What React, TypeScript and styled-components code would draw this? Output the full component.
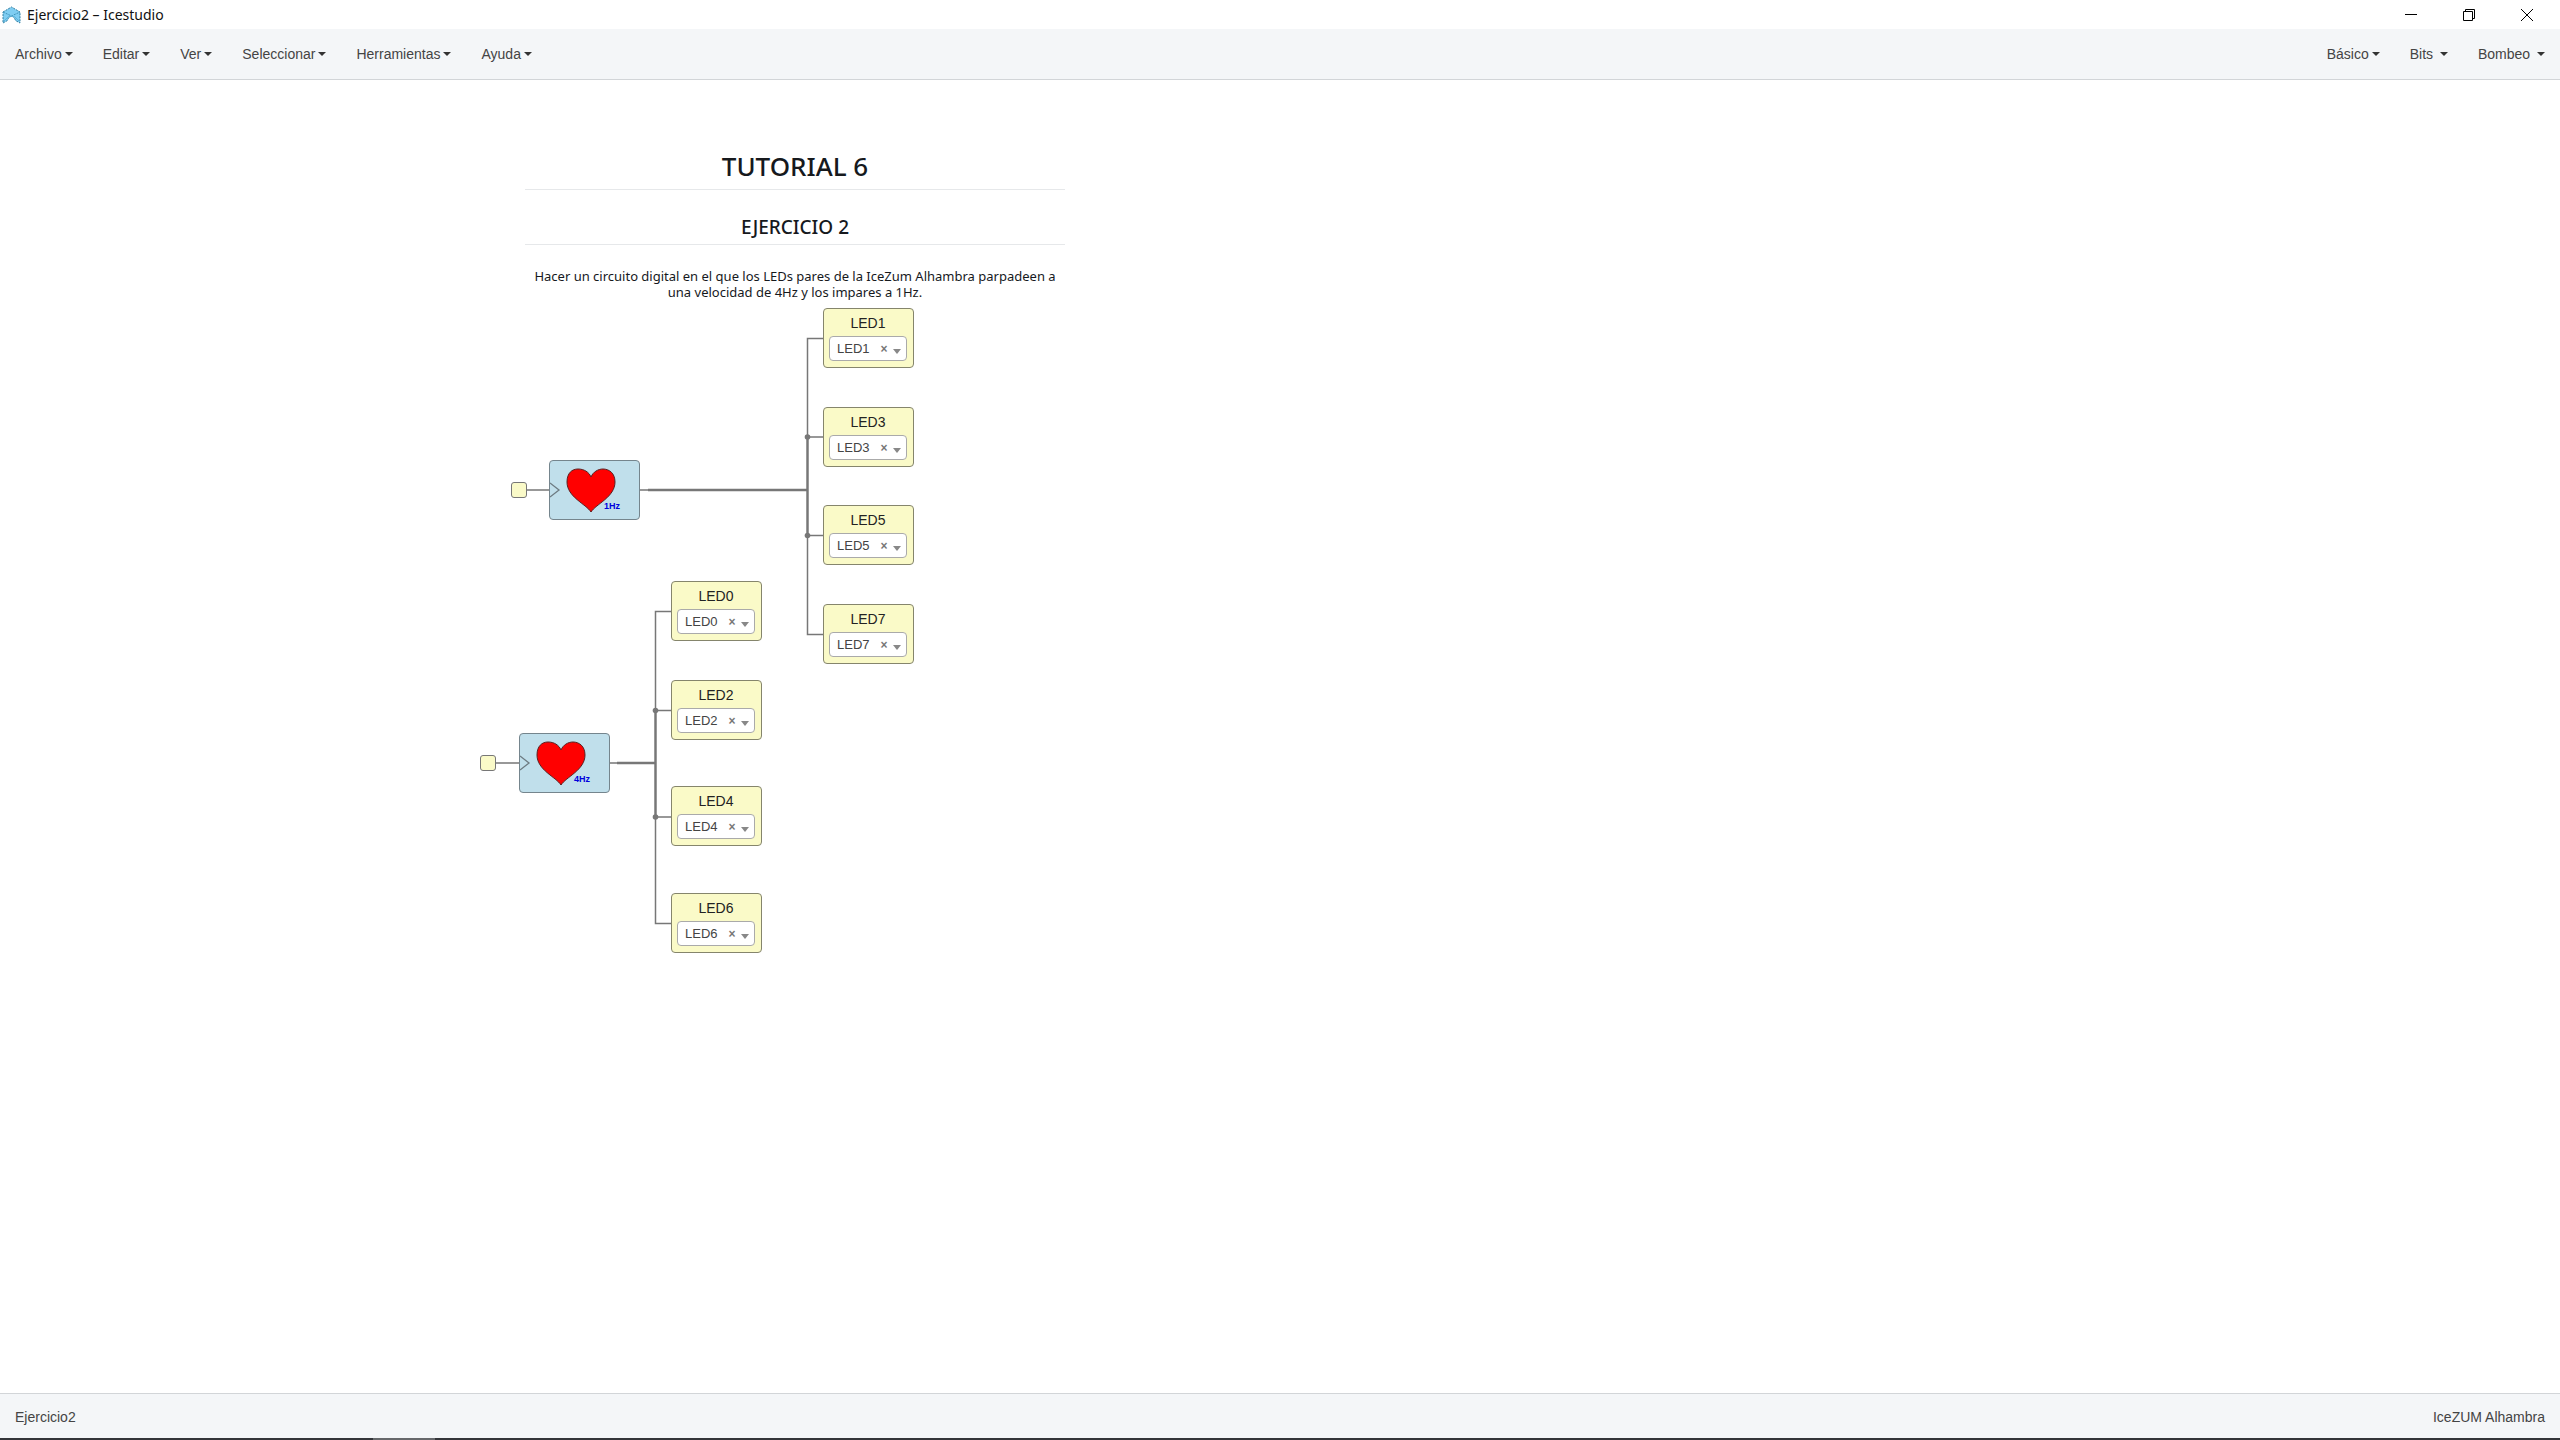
import React from 'react';
import styled, { createGlobalStyle } from 'styled-components';

const GlobalStyle = createGlobalStyle`
  * { box-sizing: border-box; }
  body { margin: 0; background: #fff; }
  button, select { font: inherit; color: inherit; border: 0; background: none; padding: 0; margin: 0; }
`;

const ui = '"Liberation Sans", Arial, sans-serif';
const system = '"Noto Sans", "Open Sans", sans-serif';

const Window = styled.div`
  display: flex;
  flex-direction: column;
  min-height: 100vh;
  font-family: ${ui};
  font-size: 14px;
  line-height: 20px;
  color: #444;
`;

const TitleBar = styled.header`
  display: flex;
  align-items: center;
  height: 29px;
  padding: 0 4px 0 2px;
  background: #fff;
`;

const WindowTitle = styled.h1`
  flex: 1;
  margin: 0 0 0 5px;
  font: 400 14px/20px ${system};
  color: #111;
`;

const WindowButton = styled.button`
  display: flex;
  align-items: center;
  justify-content: center;
  width: 58px;
  height: 28px;
`;

const MenuBar = styled.nav`
  display: flex;
  justify-content: space-between;
  height: 51px;
  background: #f4f6f8;
  border-bottom: 1px solid #d2d5d8;
`;

const MenuGroup = styled.div`
  display: flex;
`;

const MenuButton = styled.button`
  display: flex;
  align-items: center;
  padding: 0 15px;
  white-space: pre;
`;

const Caret = styled.span`
  margin-left: 3px;
  border: 4px solid transparent;
  border-top-color: #333;
  border-bottom: 0;
`;

const Canvas = styled.main`
  position: relative;
  flex: 1;
  overflow: hidden;
`;

const Wires = styled.svg`
  position: absolute;
  inset: 0;
  width: 100%;
  height: 100%;
`;

type Spot = { $x: number; $y: number };

const Note = styled.article<Spot>`
  position: absolute;
  left: ${p => p.$x}px;
  top: ${p => p.$y}px;
  width: 540px;
  text-align: center;
  font: 400 13px/16px ${system};
  color: #16191d;
`;

const NoteTitle = styled.h2`
  margin: 0 0 21px;
  padding-bottom: 7px;
  border-bottom: 1px solid #e6e8ea;
  font-size: 26px;
  line-height: 32px;
  font-weight: 500;
`;

const NoteSubtitle = styled.h3`
  margin: 0 0 23px;
  padding-bottom: 1px;
  border-bottom: 1px solid #e6e8ea;
  font-size: 19px;
  line-height: 32px;
  font-weight: 500;
`;

const NoteText = styled.p`
  margin: 0;
  padding: 0 8px;
`;

const Block = styled.section<Spot>`
  position: absolute;
  left: ${p => p.$x}px;
  top: ${p => p.$y}px;
  width: 91px;
  height: 60px;
  border: 1px solid #888;
  border-radius: 4px;
`;

const LedBlock = styled(Block)`
  display: flex;
  flex-direction: column;
  padding: 4px 6px 6px 5px;
  background: #fafac8;
  border-color: #85856c;
`;

const LedLabel = styled.label`
  flex: 1;
  text-align: center;
  color: #222;
`;

const PinBox = styled.div`
  display: flex;
  align-items: center;
  height: 25px;
  padding: 0 5px 0 7px;
  background: #fff;
  border: 1px solid #aaa;
  border-radius: 4px;
`;

const PinSelect = styled.select`
  flex: 1;
  min-width: 0;
  appearance: none;
  font-size: 13px;
  line-height: 16px;
  color: #444;
`;

const ClearButton = styled.button`
  width: 10px;
  margin-right: 4px;
  font-size: 12px;
  line-height: 16px;
  font-weight: 700;
  color: #777;
`;

const PinCaret = styled(Caret)`
  margin: 5px 0 0;
  border-width: 5px 4px 0;
  border-top-color: #888;
`;

const PulseBlock = styled(Block)`
  background: #c0dfeb;
  border-color: #75858d;
`;

const PulseArt = styled.svg`
  display: block;
  width: 89px;
  height: 58px;
`;

const InputPort = styled.div<Spot>`
  position: absolute;
  left: ${p => p.$x}px;
  top: ${p => p.$y}px;
  width: 16px;
  height: 16px;
  background: #fafac8;
  border: 1px solid #777;
  border-radius: 3px;
`;

const StatusBar = styled.footer`
  display: flex;
  align-items: center;
  justify-content: space-between;
  height: 45px;
  padding: 2px 15px 0;
  background: #f4f6f8;
  border-top: 1px solid #d2d5d8;
`;

const TaskbarEdge = styled.div`
  display: flex;
  height: 2px;
  padding-left: 373px;
  background: #333539;
`;

const ActiveTask = styled.span`
  width: 62px;
  background: #66686b;
`;

const menus = ['Archivo', 'Editar', 'Ver', 'Seleccionar', 'Herramientas', 'Ayuda'];
const collections = ['Básico', 'Bits ', 'Bombeo '];

const leds = [
  { n: 1, x: 823, y: 228 },
  { n: 3, x: 823, y: 327 },
  { n: 5, x: 823, y: 425 },
  { n: 7, x: 823, y: 524 },
  { n: 0, x: 671, y: 501 },
  { n: 2, x: 671, y: 600 },
  { n: 4, x: 671, y: 706 },
  { n: 6, x: 671, y: 813 },
];

const pulses = [
  { rate: '1Hz', x: 549, y: 380, port: 511 },
  { rate: '4Hz', x: 519, y: 653, port: 480 },
];

const Menu = ({ label }: { label: string }) => (
  <MenuButton type="button" aria-haspopup="menu">
    {label}
    <Caret />
  </MenuButton>
);

const Logo = () => (
  <svg width="20" height="18" viewBox="0 0 20 18" aria-hidden="true">
    <path
      d="M1 6 9.500 1 18 6V17L13.500 14.500C12.500 11.500 11.500 10.500 9.500 10.500S6.500 11.500 5.500 14.500L1 17Z"
      fill="#7fcdf2"
      stroke="#2f7fa3"
      strokeDasharray="2 1"
    />
    <path d="M1 6 9.500 10 18 6" fill="none" stroke="#3f93ba" strokeDasharray="2 1" />
    <path d="M2 15 6 11 9 10M17 15 13 11 10 10" fill="none" stroke="#5fb3da" />
  </svg>
);

const Led = ({ n, x, y }: { n: number; x: number; y: number }) => (
  <LedBlock $x={x} $y={y}>
    <LedLabel htmlFor={`led-${n}`}>LED{n}</LedLabel>
    <PinBox>
      <PinSelect id={`led-${n}`} defaultValue={`LED${n}`}>
        <option>{`LED${n}`}</option>
      </PinSelect>
      <ClearButton type="button" aria-label={`Quitar LED${n}`}>×</ClearButton>
      <PinCaret />
    </PinBox>
  </LedBlock>
);

const Pulse = ({ rate, x, y }: { rate: string; x: number; y: number }) => (
  <PulseBlock $x={x} $y={y}>
    <PulseArt viewBox="0 0 89 58">
      <path d="M0 22 9 29 0 36" fill="none" stroke="#6d7b82" strokeWidth="1.300" />
      <path
        d="M41 51C36 43 17 36 17 21C17 12 22 8 28 8C34 8 39 11 41 16C43 11 48 8 53 8C59 8 65 12 65 21C65 36 46 43 41 51Z"
        fill="#f00"
        stroke="#5a2020"
      />
      <text x="54" y="48" fontSize="9" fontWeight="700" fill="#00d">{rate}</text>
    </PulseArt>
  </PulseBlock>
);

export default function App() {
  return (
    <>
      <GlobalStyle />
      <Window>
        <TitleBar>
          <Logo />
          <WindowTitle>Ejercicio2 – Icestudio</WindowTitle>
          <WindowButton type="button" aria-label="Minimizar">
            <svg width="12" height="12" stroke="#000"><path d="M0 5.500H12" /></svg>
          </WindowButton>
          <WindowButton type="button" aria-label="Restaurar">
            <svg width="12" height="12" fill="none" stroke="#000"><path d="M.5 2.500H9.500V11.500H.5ZM2.500 2.500V.5H11.500V9.500H9.500" /></svg>
          </WindowButton>
          <WindowButton type="button" aria-label="Cerrar">
            <svg width="12" height="12" stroke="#000"><path d="M0 0 12 12M12 0 0 12" /></svg>
          </WindowButton>
        </TitleBar>
        <MenuBar>
          <MenuGroup>{menus.map(m => <Menu key={m} label={m} />)}</MenuGroup>
          <MenuGroup>{collections.map(m => <Menu key={m} label={m} />)}</MenuGroup>
        </MenuBar>
        <Canvas>
          <Wires fill="none" stroke="#777" strokeWidth="1.500">
            <path d="M527 410H550M640 410H807M823 258.500H807.500V554.500H823M807 357H823M807 455.500H823" />
            <path d="M496 683H520M610 683H655M672 531.500H655.500V843.500H672M655 630.500H672M655 737H672" />
            <path d="M648 410H808M617 683H656M655.500 630V738M807.500 357V456" strokeWidth="2.300" />
            <g fill="#777" stroke="none">
              <circle cx="807.500" cy="357" r="2.800" />
              <circle cx="807.500" cy="455.500" r="2.800" />
              <circle cx="655.500" cy="630.500" r="2.800" />
              <circle cx="655.500" cy="737" r="2.800" />
            </g>
          </Wires>
          <Note $x={525} $y={70}>
            <NoteTitle>TUTORIAL 6</NoteTitle>
            <NoteSubtitle>EJERCICIO 2</NoteSubtitle>
            <NoteText>
              Hacer un circuito digital en el que los LEDs pares de la IceZum Alhambra parpadeen a una velocidad de 4Hz y los impares a 1Hz.
            </NoteText>
          </Note>
          {pulses.map(p => (
            <React.Fragment key={p.rate}>
              <InputPort $x={p.port} $y={p.y + 22} />
              <Pulse {...p} />
            </React.Fragment>
          ))}
          {leds.map(l => <Led key={l.n} {...l} />)}
        </Canvas>
        <StatusBar>
          <span>Ejercicio2</span>
          <span>IceZUM Alhambra</span>
        </StatusBar>
        <TaskbarEdge><ActiveTask /></TaskbarEdge>
      </Window>
    </>
  );
}
